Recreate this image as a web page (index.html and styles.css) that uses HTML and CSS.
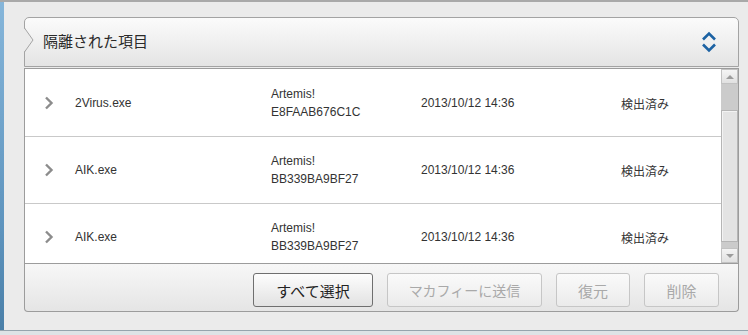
FILE: index.html
```html
<!DOCTYPE html>
<html lang="ja">
<head>
  <meta charset="UTF-8"/>
  <title>隔離された項目</title>
  <link rel="stylesheet" href="styles.css">
</head>
<body>
  <div class="window">
    <!-- blue window edge -->
    <div class="edge"></div>

    <div class="content">
      <div class="panel">
        <!-- Header with collapse toggle -->
        <div class="head">
          <svg class="notch" width="11" height="24" viewBox="0 0 11 24">
            <path d="M0 0 L9 12 L0 24 Z" fill="#ebebeb"/>
            <path d="M0.5 0 L9 12 L0.5 24" fill="none" stroke="#a3a3a3" stroke-width="1"/>
          </svg>
          <div class="title">隔離された項目</div>
          <svg class="toggle" width="16" height="24" viewBox="0 0 16 24">
            <path d="M2 9.5 L8 3.5 L14 9.5" fill="none" stroke="#1c62a3" stroke-width="2.6"/>
            <path d="M2 14.5 L8 20.5 L14 14.5" fill="none" stroke="#1c62a3" stroke-width="2.6"/>
          </svg>
        </div>

        <!-- Quarantined items -->
        <div class="list">
          <div class="rows">
            <div class="row">
              <svg class="chev" width="10" height="14" viewBox="0 0 10 14"><path d="M2 1.5 L7.5 7 L2 12.5" fill="none" stroke="#8c8c8c" stroke-width="2.4"/></svg>
              <div>2Virus.exe</div>
              <div class="threat">Artemis!<br>E8FAAB676C1C</div>
              <div>2013/10/12 14:36</div>
              <div class="jp">検出済み</div>
            </div>
            <div class="row">
              <svg class="chev" width="10" height="14" viewBox="0 0 10 14"><path d="M2 1.5 L7.5 7 L2 12.5" fill="none" stroke="#8c8c8c" stroke-width="2.4"/></svg>
              <div>AIK.exe</div>
              <div class="threat">Artemis!<br>BB339BA9BF27</div>
              <div>2013/10/12 14:36</div>
              <div class="jp">検出済み</div>
            </div>
            <div class="row">
              <svg class="chev" width="10" height="14" viewBox="0 0 10 14"><path d="M2 1.5 L7.5 7 L2 12.5" fill="none" stroke="#8c8c8c" stroke-width="2.4"/></svg>
              <div>AIK.exe</div>
              <div class="threat">Artemis!<br>BB339BA9BF27</div>
              <div>2013/10/12 14:36</div>
              <div class="jp">検出済み</div>
            </div>
          </div>

          <!-- Scrollbar -->
          <div class="scrollbar">
            <div class="sb-btn"><span class="tri up"></span></div>
            <div class="sb-track top"></div>
            <div class="sb-thumb"></div>
            <div class="sb-track bottom"></div>
            <div class="sb-btn"><span class="tri down"></span></div>
          </div>
        </div>

        <!-- Action buttons -->
        <div class="bar">
          <button class="btn w1">すべて選択</button>
          <button class="btn w2" disabled>マカフィーに送信</button>
          <button class="btn w3" disabled>復元</button>
          <button class="btn w4" disabled>削除</button>
        </div>
      </div>
    </div>
  </div>
  <div class="footer"></div>
</body>
</html>
```

FILE: styles.css
```css
/* Page and window frame */
body {
  margin: 0;
  width: 748px;
  height: 335px;
  overflow: hidden;
  background-color: #ebebeb;
  font-family: "Liberation Sans", "Noto Sans CJK JP", sans-serif;
  color: #333;
}
.window {
  display: flex;
  height: 331px;
  box-sizing: border-box;
  border-top: 2px solid #a9a9a9;
  border-bottom: 1px solid #95a4ad;
}
.edge {
  width: 4px;
  background: linear-gradient(#86b6da, #5d93bd 70%, #4a7fa8);
}
.content {
  flex: 1;
  padding: 15px 9px 0 20px;
}
.footer {
  height: 4px;
  background-color: #dde3e6;
}

/* Panel */
.panel {
  width: 715px;
}
.head {
  position: relative;
  height: 50px;
  box-sizing: border-box;
  border: 1px solid #a3a3a3;
  border-radius: 5px 5px 0 0;
  background: linear-gradient(#fbfbfb, #e4e4e4);
  display: flex;
  align-items: center;
  justify-content: space-between;
  padding: 0 21px 0 18px;
}
.notch {
  position: absolute;
  left: -1px;
  top: 10px;
}
.title {
  font-family: "Noto Sans CJK JP", sans-serif;
  font-size: 15px;
  line-height: 15px;
  margin-bottom: 3px;
  color: #2a2a2a;
}
.toggle {
  display: block;
}

/* List of quarantined items */
.list {
  margin-top: 1px;
  height: 196px;
  box-sizing: border-box;
  border: 1px solid #9c9c9c;
  background-color: #fff;
  display: flex;
}
.rows {
  flex: 1;
  overflow: hidden;
  padding-top: 1px;
}
.row {
  height: 67px;
  box-sizing: border-box;
  border-bottom: 1px solid #c9c9c9;
  display: grid;
  grid-template-columns: 31px 196px 150px 200px 1fr;
  align-items: center;
  padding-left: 19px;
  font-size: 12px;
}
.threat {
  line-height: 18px;
}
.jp {
  font-family: "Noto Sans CJK JP", sans-serif;
}
.chev {
  display: block;
}

/* Scrollbar */
.scrollbar {
  width: 17px;
  display: flex;
  flex-direction: column;
  background-color: #cbcbcb;
}
.sb-btn {
  height: 15px;
  box-sizing: border-box;
  border: 1px solid #c2c2c2;
  background: linear-gradient(#f4f4f4, #e1e1e1);
  display: flex;
  align-items: center;
  justify-content: center;
}
.tri {
  width: 0;
  height: 0;
  border-left: 4px solid transparent;
  border-right: 4px solid transparent;
}
.tri.up {
  border-bottom: 4px solid #9c9c9c;
}
.tri.down {
  border-top: 4px solid #9c9c9c;
}
.sb-track.top {
  height: 26px;
}
.sb-track.bottom {
  height: 6px;
}
.sb-thumb {
  flex: 1;
  box-sizing: border-box;
  border: 1px solid #b5b5b5;
  background-color: #e3e3e3;
  box-shadow: inset 1px 1px 0 #f3f3f3;
}

/* Button bar */
.bar {
  height: 48px;
  box-sizing: border-box;
  border: 1px solid #9c9c9c;
  border-top: none;
  border-radius: 0 0 4px 4px;
  background: linear-gradient(#f7f7f7, #e5e5e5);
  display: flex;
  justify-content: flex-end;
  align-items: flex-start;
  gap: 14px;
  padding: 9px 19px 0 0;
}
.btn {
  height: 34px;
  border: 1px solid #6f6f6f;
  border-radius: 3px;
  background: linear-gradient(#fdfdfd, #e2e2e2);
  font-family: "Noto Sans CJK JP", sans-serif;
  font-size: 15px;
  color: #222;
  padding: 0;
}
.btn:disabled {
  border-color: #c6c6c6;
  background: linear-gradient(#fafafa, #ebebeb);
  color: #a9a9a9;
}
.w1 { width: 120px; }
.w2 { width: 155px; font-size: 14px; }
.w3 { width: 74px; }
.w4 { width: 75px; }
```
